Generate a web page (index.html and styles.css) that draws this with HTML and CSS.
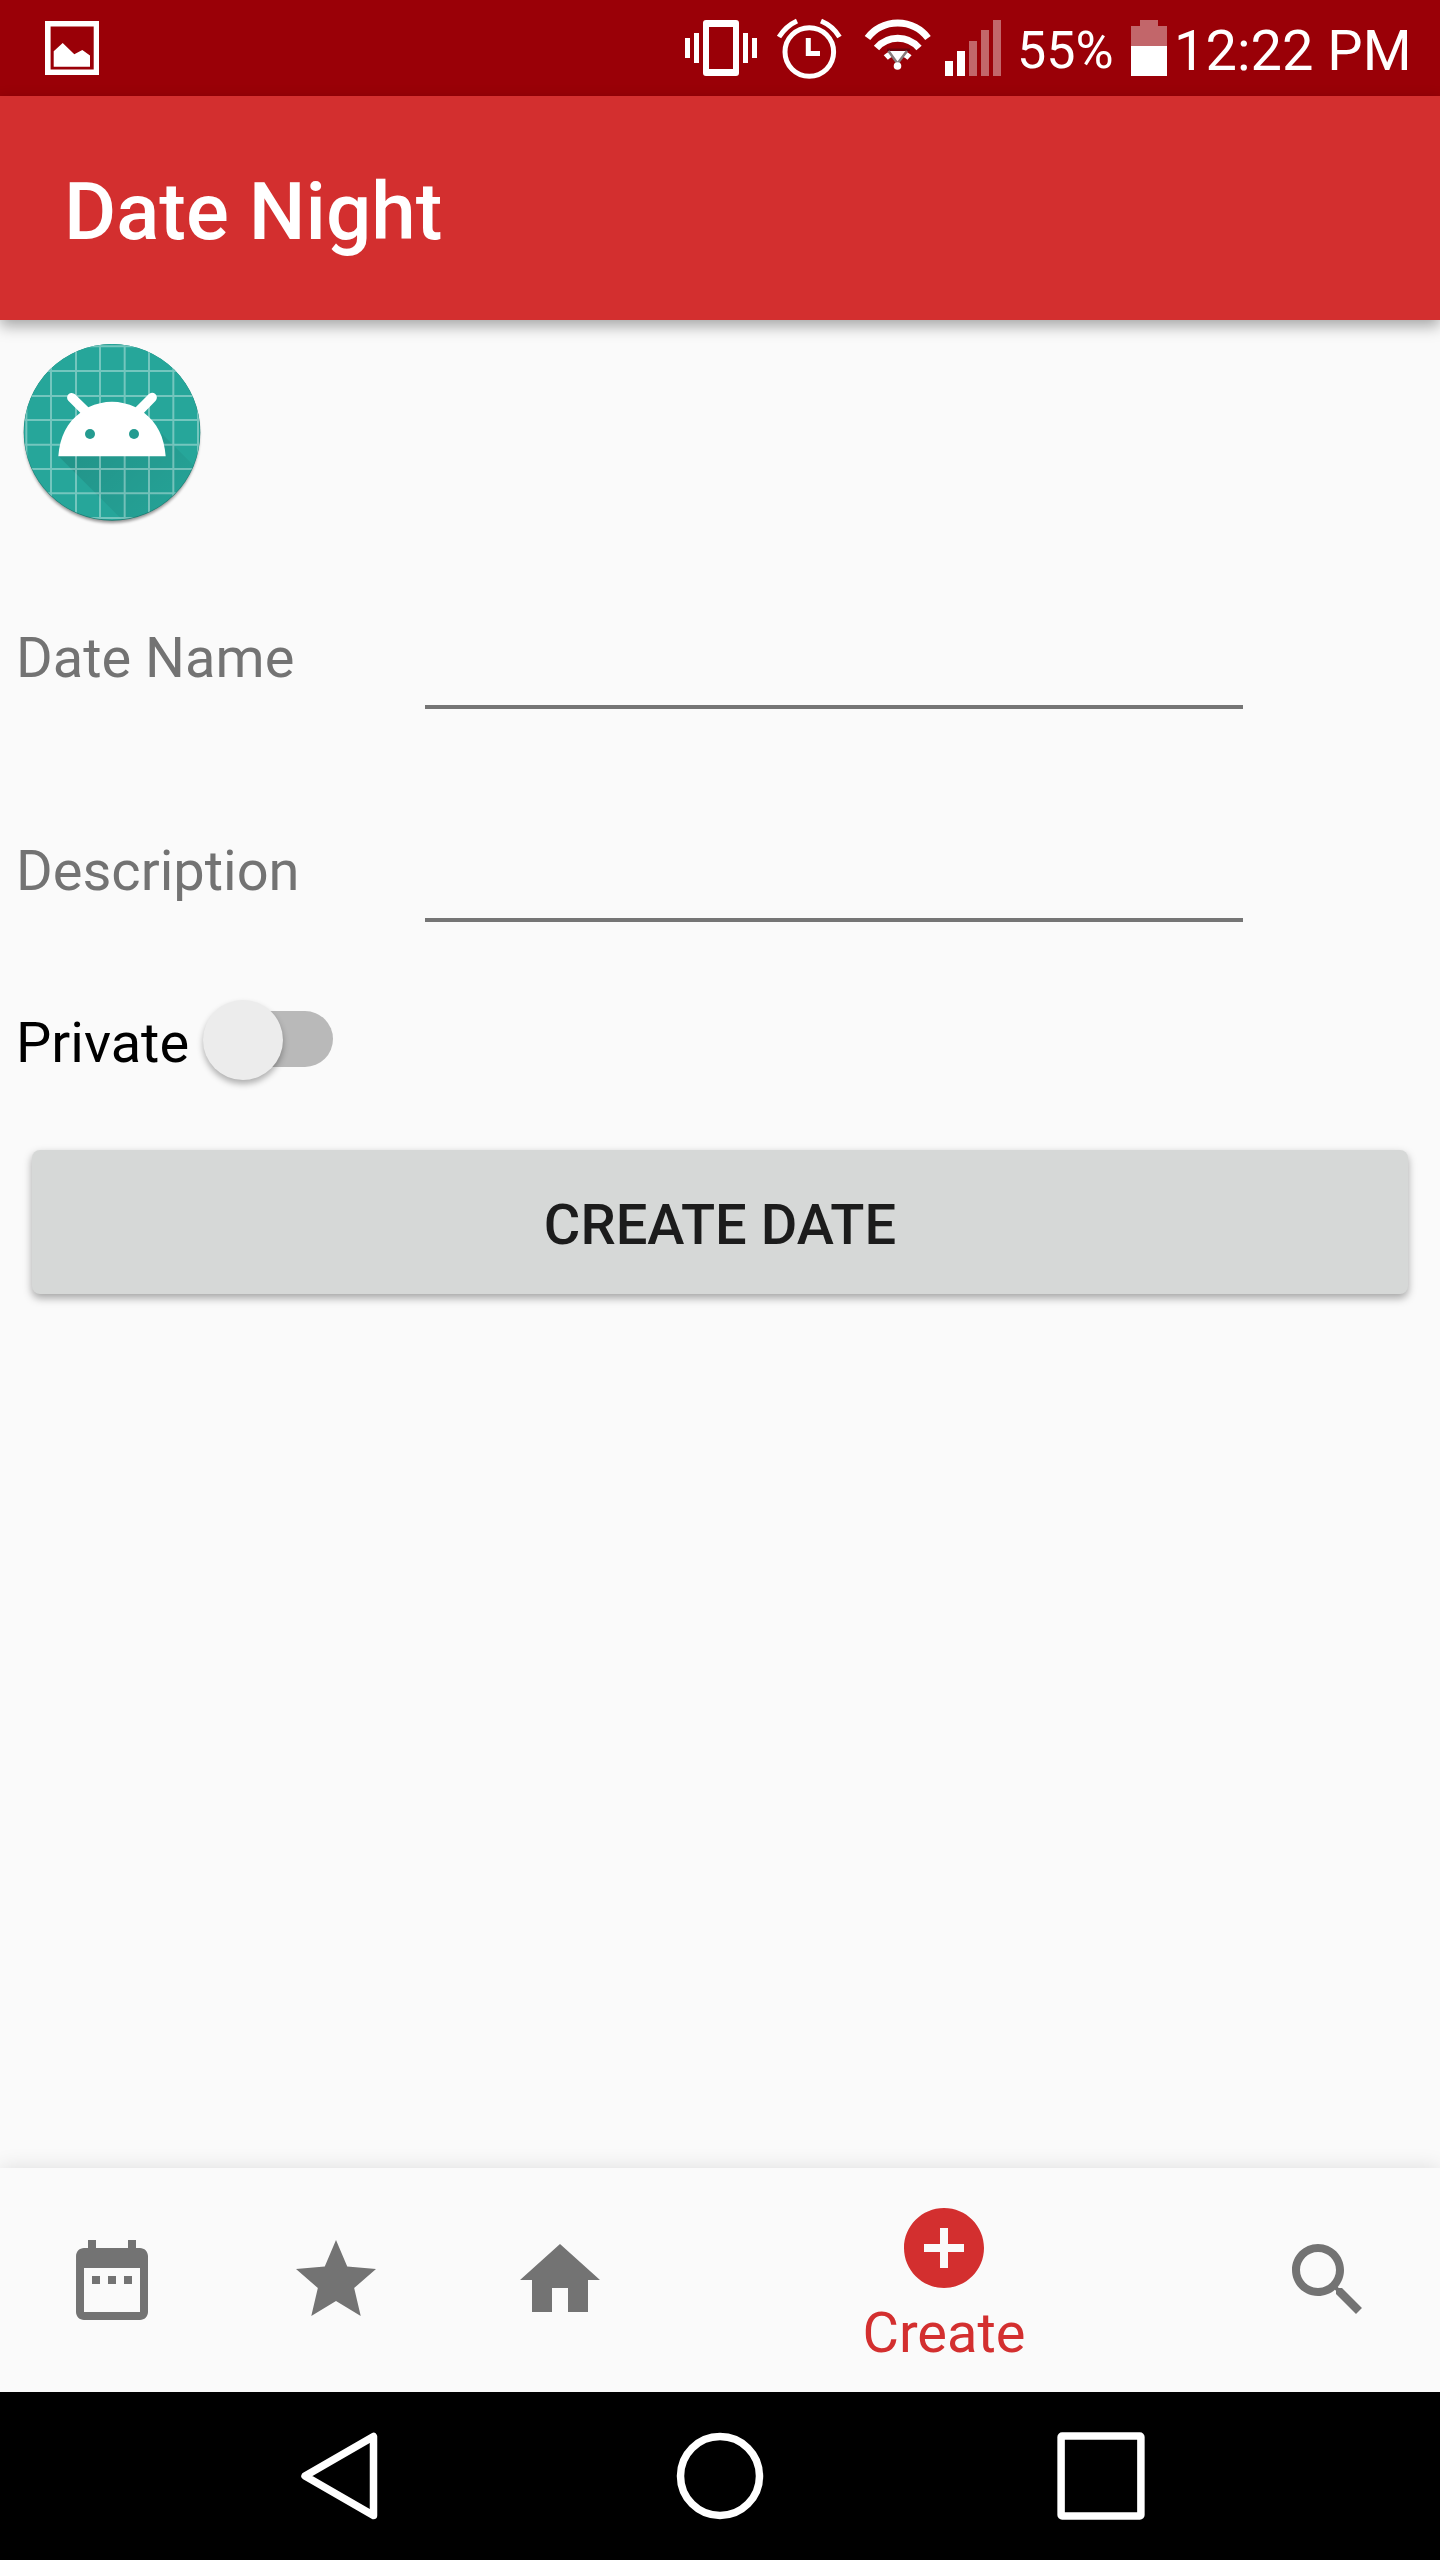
FILE: index.html
```html
<!DOCTYPE html>
<html lang="en">
<head>
<meta charset="utf-8">
<title>Date Night</title>
<link rel="stylesheet" href="styles.css">
</head>
<body>
<div class="screen">
  <div class="status-bar">
    <svg class="status-picture" width="54" height="54" viewBox="0 0 54 54" fill="#fff"><path fill-rule="evenodd" d="M0 0H54V54H0ZM5.6 5.6V48.4H48.7V5.6Z"/><path d="M8.7 45.7V30.3L17.7 22L29.3 33.2L37.3 29L45 34.5V45.7Z"/></svg>
    <svg class="status-icons" width="330" height="96" viewBox="0 0 330 96" fill="#fff">
      <path fill-rule="evenodd" d="M3 20H33Q36 20 36 23V73Q36 76 33 76H3Q0 76 0 73V23Q0 20 3 20ZM6 27V69H30V27Z"/>
      <path d="M-18 38h5v20h-5zM-9 33h5v30h-5zM40 33h5v30h-5zM49 38h5v20h-5z"/>
      <g fill="none" stroke="#fff">
        <circle cx="106.300" cy="52" r="24.300" stroke-width="5"/>
        <path d="M105.300 38V53.500H117" stroke-width="5"/>
        <path d="M76 37Q83 26 94 21M118 21Q130 26 136.500 37" stroke-width="5"/>
        <path d="M164.500 38A38 38 0 0 1 225 38" stroke-width="7"/>
        <path d="M173.500 48A28 28 0 0 1 216 48" stroke-width="7"/>
        <path d="M182.800 57.500A17 17 0 0 1 206.500 57.500" stroke-width="6"/>
      </g>
      <path d="M184 48.500H207V51H184Z" fill="#69040c"/>
      <path d="M185 51H204L194.500 64Z"/>
      <path d="M185.500 51L194.500 63.500L204 51" fill="none" stroke="#867b7c" stroke-width="2.500"/>
      <circle cx="194.500" cy="66" r="3.800"/>
      <path d="M242 61h8v15h-8zM254 51h8v25h-8z"/>
      <path d="M266 41h8v35h-8zM278 30h8v46h-8zM290 20h8v56h-8z" opacity=".4"/>
    </svg>
    <span class="battery-level">55%</span>
    <svg class="battery" width="36" height="56" viewBox="0 0 36 56" fill="#fff"><path opacity=".4" d="M0 6H9V0H27V6H36V26H0Z"/><path d="M0 26H36V56H0Z"/></svg>
    <span class="clock">12:22 PM</span>
  </div>

  <header class="app-bar"><h1 class="title">Date Night</h1></header>

  <main class="content">
    <svg class="logo" width="192" height="192" viewBox="48 48 576 576">
      <defs>
        <clipPath id="disc"><circle cx="336" cy="336" r="264"/></clipPath>
        <linearGradient id="fade" gradientUnits="userSpaceOnUse" x1="250" y1="300" x2="510" y2="560"><stop offset="0" stop-opacity=".12"/><stop offset="1" stop-opacity=".03"/></linearGradient>
        <filter id="soft" x="-10%" y="-10%" width="120%" height="120%"><feGaussianBlur stdDeviation="5"/></filter>
      </defs>
      <circle cx="336" cy="347" r="262" opacity=".4" filter="url(#soft)"/>
      <circle cx="336" cy="337" r="265" fill="#1c7d72"/>
      <g clip-path="url(#disc)">
        <rect x="70" y="70" width="532" height="530" fill="#26a69a"/>
        <path d="M175 408L497 408L484 340L620 475V660H427Z" fill="url(#fade)"/>
        <path d="M79 60V610M153 60V610M228 60V610M300 60V610M374 60V610M447 60V610M520 60V610M594 60V610M60 79H610M60 153H610M60 228H610M60 300H610M60 374H610M60 447H610M60 520H610M60 594H610" stroke="#fff" stroke-opacity=".36" stroke-width="6"/>
      </g>
      <path d="M175 409C179 350 203 305 241 278L205 242A13 13 0 0 1 225 223L265 262Q336 229 407 262L446 223A13 13 0 0 1 467 242L432 278C471 308 493 350 497 409Z" fill="#fff"/>
      <circle cx="270" cy="342" r="15" fill="#249b90"/><circle cx="402" cy="342" r="15" fill="#249b90"/>
    </svg>

    <div class="field"><label class="label" for="name">Date Name</label><input class="input" id="name" type="text"></div>
    <div class="field"><label class="label" for="description">Description</label><input class="input" id="description" type="text"></div>
    <div class="switch-row"><span class="switch-label">Private</span><span class="track"><span class="thumb"></span></span></div>
    <button class="create-button">CREATE DATE</button>
  </main>

  <nav class="tabs">
    <a class="tab"><svg class="icon" viewBox="0 0 24 24"><path d="M9 11H7v2h2v-2zm4 0h-2v2h2v-2zm4 0h-2v2h2v-2zm2-7h-1V2h-2v2H8V2H6v2H5c-1.110 0-1.990.9-1.990 2L3 20c0 1.100.89 2 2 2h14c1.100 0 2-.9 2-2V6c0-1.100-.9-2-2-2zm0 16H5V9h14v11z"/></svg></a>
    <a class="tab"><svg class="icon" viewBox="0 0 24 24"><path d="M12 17.270L18.180 21l-1.640-7.030L22 9.240l-7.190-.61L12 2 9.190 8.630 2 9.240l5.460 4.730L5.820 21z"/></svg></a>
    <a class="tab"><svg class="icon" viewBox="0 0 24 24"><path d="M10 20v-6h4v6h5v-8h3L12 3 2 12h3v8z"/></svg></a>
    <a class="tab tab-active"><svg class="icon" viewBox="0 0 24 24"><path d="M12 2C6.480 2 2 6.480 2 12s4.480 10 10 10 10-4.480 10-10S17.520 2 12 2zm5 11h-4v4h-2v-4H7v-2h4V7h2v4h4v2z"/></svg><span class="tab-label">Create</span></a>
    <a class="tab"><svg class="icon" viewBox="0 0 24 24"><path d="M15.500 14h-.79l-.28-.27C15.410 12.590 16 11.110 16 9.500 16 5.910 13.090 3 9.500 3S3 5.910 3 9.500 5.910 16 9.500 16c1.610 0 3.090-.59 4.230-1.570l.27.28v.79l5 4.990L20.490 19l-4.990-5zm-6 0C7.010 14 5 11.990 5 9.500S7.010 5 9.500 5 14 7.010 14 9.500 11.990 14 9.500 14z"/></svg></a>
  </nav>

  <div class="system-bar">
    <svg width="83" height="88" viewBox="0 0 83 88"><path d="M73.500 4.500V83.500L5 44Z"/></svg>
    <svg width="88" height="88" viewBox="0 0 88 88"><circle cx="44" cy="44" r="39.500"/></svg>
    <svg width="88" height="88" viewBox="0 0 88 88"><rect x="4.100" y="4.100" width="79.800" height="79.800" rx="1"/></svg>
  </div>
</div>
</body>
</html>
```
FILE: styles.css
```css
* { box-sizing: border-box; }
body { margin: 0; background: #fafafa; font-family: Roboto, "Noto Sans", sans-serif; }
.screen { width: 1440px; height: 2560px; display: flex; flex-direction: column; overflow: hidden; }

.status-bar { height: 96px; flex: none; display: flex; align-items: flex-start; background: #9a0007; color: #fff; white-space: nowrap; }
.status-picture { margin: 21px 0 0 45px; }
.status-icons { margin-left: 604px; overflow: visible; flex: none; }
.battery-level { width: 114px; margin: 19px 0 0 -16px; font-size: 52px; line-height: 64px; }
.battery { margin: 20px 0 0 0; flex: none; }
.clock { margin: 18px 0 0 7px; font-size: 56px; line-height: 66px; }

.app-bar { position: relative; height: 224px; flex: none; display: flex; align-items: center; padding: 7px 0 0 64px; background: #d32f2f; box-shadow: 0 6px 14px rgba(0, 0, 0, .34); }
.title { margin: 0; color: #fff; font-size: 80px; font-weight: 500; line-height: 94px; }

.content { flex: 1; display: flex; flex-direction: column; padding: 16px; }
.logo { display: block; flex: none; }
.field { display: flex; height: 213px; align-items: flex-start; }
.logo + .field { margin-top: 61px; }
.label { width: 409px; padding-top: 36px; color: #737373; font-size: 56px; line-height: 66px; }
.input { width: 818px; height: 120px; padding: 0; border: 0; border-bottom: 4px solid #757575; background: none; outline: 0; font: inherit; font-size: 72px; }
.switch-row { display: flex; align-items: center; height: 80px; margin-top: -15px; }
.switch-label { width: 197px; padding-top: 6px; color: #000; font-size: 56px; line-height: 66px; }
.track { width: 120px; height: 56px; margin-bottom: 2px; border-radius: 28px; background: #b9b9b9; display: flex; align-items: center; }
.thumb { flex: none; width: 80px; height: 80px; margin: 2px 0 0 -10px; border-radius: 50%; background: #ececec; box-shadow: 0 4px 6px rgba(0, 0, 0, .3); }
.create-button { height: 144px; margin: 70px 16px 0; padding: 6px 0 0; border: 0; border-radius: 8px; background: #d6d8d7; color: #1c1c1c; font: 500 56px/66px Roboto, sans-serif; box-shadow: 0 4px 8px rgba(0, 0, 0, .35); }

.tabs { position: relative; height: 224px; flex: none; display: grid; grid-template-columns: 224px 224px 224px 544px 224px; background: #fafafa; box-shadow: 0 0 20px rgba(0, 0, 0, .12); }
.tab { display: flex; flex-direction: column; align-items: center; padding-top: 64px; color: #737373; }
.tab-active { padding-top: 32px; color: #d32f2f; }
.icon { width: 96px; height: 96px; fill: currentColor; flex: none; }
.tab-label { font-size: 56px; line-height: 66px; margin-top: 4px; }

.system-bar { position: relative; height: 168px; flex: none; display: flex; padding: 40px 295px 0 300px; justify-content: space-between; background: #000; }
.system-bar svg { fill: none; stroke: #fff; stroke-width: 7.5px; stroke-linejoin: round; }
```
